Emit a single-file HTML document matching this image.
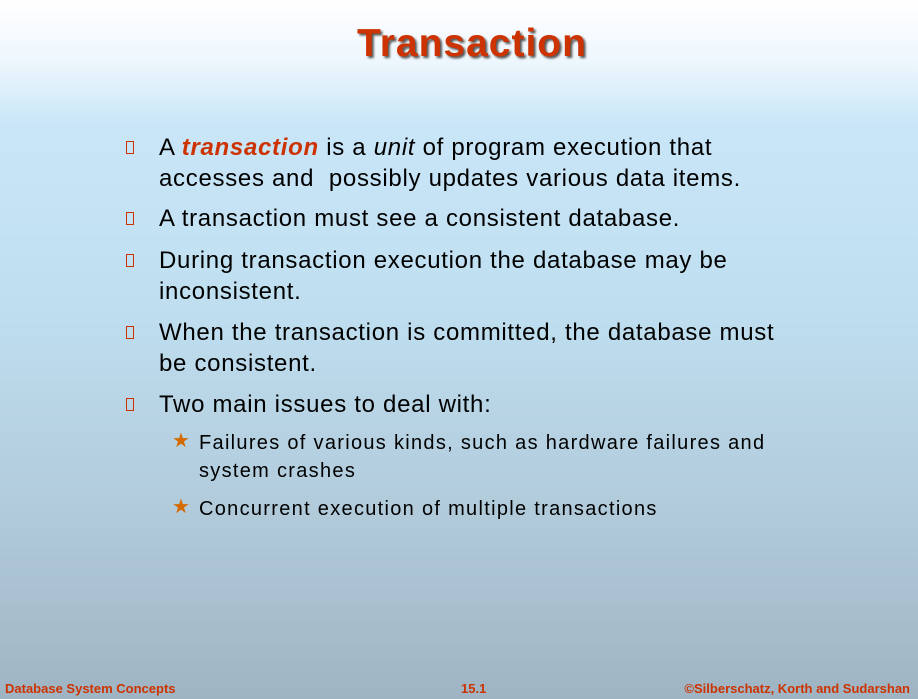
<!DOCTYPE html><html><head><style>
body{margin:0;width:918px;height:699px;overflow:hidden;font-family:"Liberation Sans",Arial,sans-serif;
background:linear-gradient(to bottom,#ffffff 0px,#eef7fd 60px,#c9e6f8 125px,#bfdff0 300px,#b2ccdc 500px,#9fb4c3 699px);position:relative}
.t{position:absolute;left:0;width:944px;text-align:center;top:22px;font-size:39px;font-weight:bold;color:#cc3300;text-shadow:2px 2px 2px #555;letter-spacing:1px}
.p{position:absolute;left:159px;font-size:24px;line-height:31px;color:#000;width:720px;letter-spacing:0.7px;white-space:nowrap}
.b{position:absolute;left:126px;width:8px;height:13px;border:1.5px solid #cc3300;box-sizing:border-box}
.s{position:absolute;left:199px;font-size:20px;line-height:28px;color:#000;letter-spacing:1.3px;white-space:nowrap}
.st{position:absolute;left:172px;color:#d46a00;font-size:20px}
.f{position:absolute;top:681px;font-family:"Liberation Sans Narrow","Liberation Sans",sans-serif;font-weight:bold;font-size:13px;color:#cc3300}
em{font-style:italic}
</style></head><body>
<div class="t">Transaction</div>
<div class="b" style="top:141px"></div>
<div class="p" style="top:132px">A <b><em style="color:#cc3300">transaction</em></b> is a <em>unit</em> of program execution that<br>accesses and &nbsp;possibly updates various data items.</div>
<div class="b" style="top:212px"></div>
<div class="p" style="top:203px">A transaction must see a consistent database.</div>
<div class="b" style="top:254px"></div>
<div class="p" style="top:245px">During transaction execution the database may be<br>inconsistent.</div>
<div class="b" style="top:326px"></div>
<div class="p" style="top:317px">When the transaction is committed, the database must<br>be consistent.</div>
<div class="b" style="top:398px"></div>
<div class="p" style="top:389px">Two main issues to deal with:</div>
<div class="st" style="top:428px">★</div>
<div class="s" style="top:429px">Failures of various kinds, such as hardware failures and<br>system crashes</div>
<div class="st" style="top:494px">★</div>
<div class="s" style="top:495px">Concurrent execution of multiple transactions</div>
<div class="f" style="left:5px">Database System Concepts</div>
<div class="f" style="left:461px">15.1</div>
<div class="f" style="right:8px">©Silberschatz, Korth and Sudarshan</div>
</body></html>
